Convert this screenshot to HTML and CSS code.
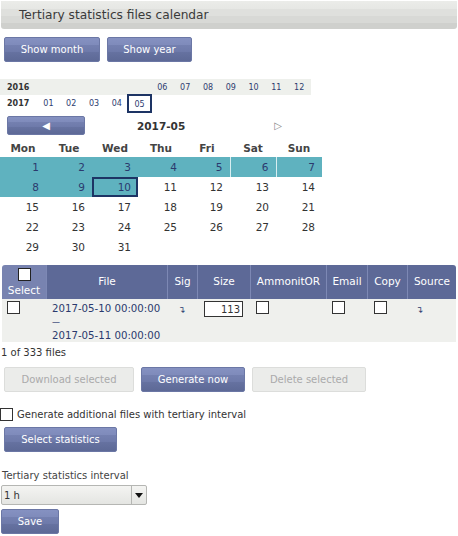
FILE: index.html
```html
<!DOCTYPE html>
<html>
<head>
<meta charset="utf-8">
<link rel="stylesheet" href="styles.css">
</head>
<body>
<div class="page">
  <div class="titlebar">Tertiary statistics files calendar</div>
  <div class="btnrow top">
    <button class="btn w-month">Show month</button>
    <button class="btn w-year">Show year</button>
  </div>

  <table class="years">
    <tr class="y2016">
      <td class="yr">2016</td><td></td><td></td><td></td><td></td><td></td>
      <td>06</td><td>07</td><td>08</td><td>09</td><td>10</td><td>11</td><td>12</td>
    </tr>
    <tr>
      <td class="yr">2017</td><td>01</td><td>02</td><td>03</td><td>04</td><td class="sel">05</td>
      <td></td><td></td><td></td><td></td><td></td><td></td><td></td>
    </tr>
  </table>

  <div class="nav">
    <button class="btn prev">&#9664;</button>
    <div class="cur">2017-05</div>
    <div class="next">&#9655;</div>
  </div>

  <table class="cal">
    <tr class="head"><th>Mon</th><th>Tue</th><th>Wed</th><th>Thu</th><th>Fri</th><th>Sat</th><th>Sun</th></tr>
    <tr><td class="hl">1</td><td class="hl">2</td><td class="hl">3</td><td class="hl">4</td><td class="hl">5</td><td class="hl sep">6</td><td class="hl sep">7</td></tr>
    <tr><td class="hl">8</td><td class="hl">9</td><td class="hl today">10</td><td>11</td><td>12</td><td>13</td><td>14</td></tr>
    <tr><td>15</td><td>16</td><td>17</td><td>18</td><td>19</td><td>20</td><td>21</td></tr>
    <tr><td>22</td><td>23</td><td>24</td><td>25</td><td>26</td><td>27</td><td>28</td></tr>
    <tr><td>29</td><td>30</td><td>31</td><td></td><td></td><td></td><td></td></tr>
  </table>

  <table class="files">
    <colgroup>
      <col class="c-sel"><col class="c-file"><col class="c-sig"><col class="c-size">
      <col class="c-amm"><col class="c-mail"><col class="c-copy"><col class="c-src">
    </colgroup>
    <tr class="fh">
      <th class="selh"><span class="cb hcb"></span><span class="sellbl">Select</span></th>
      <th>File</th><th>Sig</th><th>Size</th><th>AmmonitOR</th><th>Email</th><th>Copy</th><th class="last">Source</th>
    </tr>
    <tr class="fr">
      <td><span class="cb rcb"></span></td>
      <td class="fname">2017-05-10 00:00:00<br><span class="dash">—</span><br>2017-05-11 00:00:00</td>
      <td class="arrow">&#8628;</td>
      <td><span class="sizebox">113</span></td>
      <td><span class="cb rcb"></span></td>
      <td><span class="cb rcb"></span></td>
      <td><span class="cb rcb"></span></td>
      <td class="arrow">&#8628;</td>
    </tr>
  </table>

  <div class="count">1 of 333 files</div>

  <div class="btnrow actions">
    <button class="btn dis w-dl">Download selected</button>
    <button class="btn w-gen">Generate now</button>
    <button class="btn dis w-del">Delete selected</button>
  </div>

  <div class="chkline"><span class="cb"></span><span>Generate additional files with tertiary interval</span></div>

  <div class="btnrow stats">
    <button class="btn w-stat">Select statistics</button>
  </div>

  <div class="lbl">Tertiary statistics interval</div>
  <div class="select"><span class="val">1 h</span><span class="dd"><span class="tri"></span></span></div>
  <button class="btn w-save">Save</button>
</div>
</body>
</html>
```

FILE: styles.css
```css
* { box-sizing: border-box; }
body {
  margin: 0;
  font-family: "DejaVu Sans", Verdana, sans-serif;
  font-size: 10px;
  color: #333;
  background: #fff;
}
.page { width: 458px; }

.titlebar {
  margin: 1px 1px 0 1px;
  height: 28px;
  line-height: 29px;
  padding-left: 18px;
  font-size: 12.2px;
  color: #3a3a3a;
  border-radius: 0 0 3px 3px;
  background: linear-gradient(#ebece9 0%, #e6e7e4 28%, #dfe0dd 28%, #dfe0dd 55%, #d8d9d6 55%, #d8d9d6 78%, #cfd0cd 78%);
}

.btn {
  font-family: "DejaVu Sans", Verdana, sans-serif;
  font-size: 10px;
  color: #fff;
  height: 25px;
  padding: 0;
  border: 1px solid #6b77a5;
  border-radius: 2px;
  background: linear-gradient(#8591c1 0%, #7f8bbb 30%, #7480b0 30%, #6e7aaa 60%, #6672a1 60%, #5d6996 100%);
  cursor: pointer;
}
.btn.dis {
  color: #aaa;
  border: 1px solid #dcdddb;
  background: #ebecea;
}
.btnrow { display: flex; }
.top { margin-top: 8px; padding-left: 4px; gap: 7px; }
.w-month { width: 96px; }
.w-year { width: 85px; }

.years {
  margin-top: 17px;
  border-collapse: collapse;
  width: 310px;
  table-layout: fixed;
  font-size: 8px;
}
.years td {
  width: 22.8px;
  text-align: center;
  color: #2e3d70;
  padding: 0;
}
.years td.yr {
  width: 37px;
  text-align: left;
  padding-left: 7px;
  font-weight: bold;
  color: #333;
}
.years tr { height: 17px; }
.years tr.y2016 { height: 16px; background: #eef0ec; }
.years td.sel {
  outline: 2px solid #1d3464;
  outline-offset: -1px;
  padding-top: 2px;
}

.nav {
  display: flex;
  align-items: center;
  margin-top: 4px;
  height: 19px;
}
.btn.prev {
  width: 78px;
  height: 19px;
  margin-left: 7px;
  font-size: 10px;
  line-height: 17px;
}
.cur {
  margin-left: 52px;
  font-weight: bold;
  font-size: 10.5px;
  color: #333;
}
.next {
  margin-left: 89px;
  color: #888;
  font-size: 10px;
}

.cal {
  margin-top: 4px;
  border-collapse: collapse;
  table-layout: fixed;
  width: 322px;
}
.cal th, .cal td { width: 46px; padding: 0; }
.cal th {
  height: 18px;
  text-align: center;
  font-weight: bold;
  color: #444;
  font-size: 10.5px;
}
.cal td {
  height: 20px;
  text-align: right;
  padding-right: 7px;
  color: #333;
  font-size: 10.5px;
}
.cal td.hl { background: #5fb2bf; color: #2b3a6e; }
.cal td.sep { border-left: 1px solid #d8eef1; }
.cal td.today {
  outline: 2px solid #1d3464;
  outline-offset: -2px;
}

.files {
  margin: 8px 0 0 2px;
  border-collapse: separate;
  border-spacing: 0;
  table-layout: fixed;
  width: 454px;
}
.c-sel { width: 44px; }
.c-file { width: 121px; }
.c-sig { width: 30px; }
.c-size { width: 53px; }
.c-amm { width: 76px; }
.c-mail { width: 41px; }
.c-copy { width: 40px; }
.c-src { width: 49px; }
.fh th {
  height: 34px;
  background: #5d6997;
  color: #fff;
  font-weight: normal;
  font-size: 10.5px;
  border-left: 1px solid #7d88b4;
  padding: 0 0 2px 0;
  text-align: center;
}
.fh th.selh {
  border-left: none;
  background: #7883b0;
  border-top-left-radius: 3px;
  padding: 3px 0 0 0;
  vertical-align: top;
}
.fh th.last { border-top-right-radius: 3px; }
.sellbl { display: block; margin-top: 3px; line-height: 12px; }

.cb {
  display: inline-block;
  width: 13px;
  height: 13px;
  background: #fff;
  border: 1px solid #333;
  vertical-align: top;
}
.hcb { display: block; margin: 0 auto; border-color: #222; }
.fr td {
  background: #eff0ed;
  height: 43px;
  vertical-align: top;
  padding: 2px 0 0 0;
}
.fr td:first-child { padding-left: 5px; }
.fr td:nth-child(5) { padding-left: 6px; }
.fr td:nth-child(6) { padding-left: 6px; }
.fr td:nth-child(7) { padding-left: 7px; }
.fname {
  color: #2b3a6e;
  line-height: 13px;
  padding: 3px 0 0 6px !important;
  white-space: nowrap;
  font-size: 10.2px;
}
.dash { font-size: 8px; }
.arrow {
  color: #2b3a6e;
  font-size: 9px;
  text-align: center;
  padding-top: 6px !important;
}
.fr td.arrow:last-child { text-align: left; padding-left: 9px !important; }
.sizebox {
  display: block;
  margin: 0 0 0 7px;
  width: 39px;
  height: 16px;
  border: 1px solid #333;
  background: #fff;
  text-align: right;
  padding-right: 2px;
  line-height: 15px;
  font-size: 10px;
}

.count { margin-top: 4px; height: 14px; line-height: 14px; padding-left: 1px; }

.actions { margin-top: 7px; padding-left: 4px; gap: 7px; }
.w-dl { width: 130px; }
.w-gen { width: 104px; }
.w-del { width: 114px; }

.chkline {
  margin-top: 16px;
  display: flex;
  align-items: center;
  gap: 4px;
  height: 13px;
}
.stats { margin-top: 6px; padding-left: 4px; }
.w-stat { width: 113px; }

.lbl { margin-top: 17px; padding-left: 2px; line-height: 14px; color: #444; }
.select {
  margin: 2px 0 0 1px;
  width: 146px;
  height: 20px;
  border: 1px solid #b5b6b3;
  border-radius: 2px;
  background: linear-gradient(#f4f4f2, #e4e5e2);
  display: flex;
  align-items: center;
}
.select .val { flex: 1; padding-left: 2px; }
.select .dd {
  width: 15px;
  height: 18px;
  border-left: 1px solid #b5b6b3;
  display: flex;
  align-items: center;
  justify-content: center;
}
.tri {
  width: 0; height: 0;
  border-left: 4px solid transparent;
  border-right: 4px solid transparent;
  border-top: 5px solid #111;
}
.w-save { display: block; margin: 4px 0 0 1px; width: 58px; height: 25px; }
```
